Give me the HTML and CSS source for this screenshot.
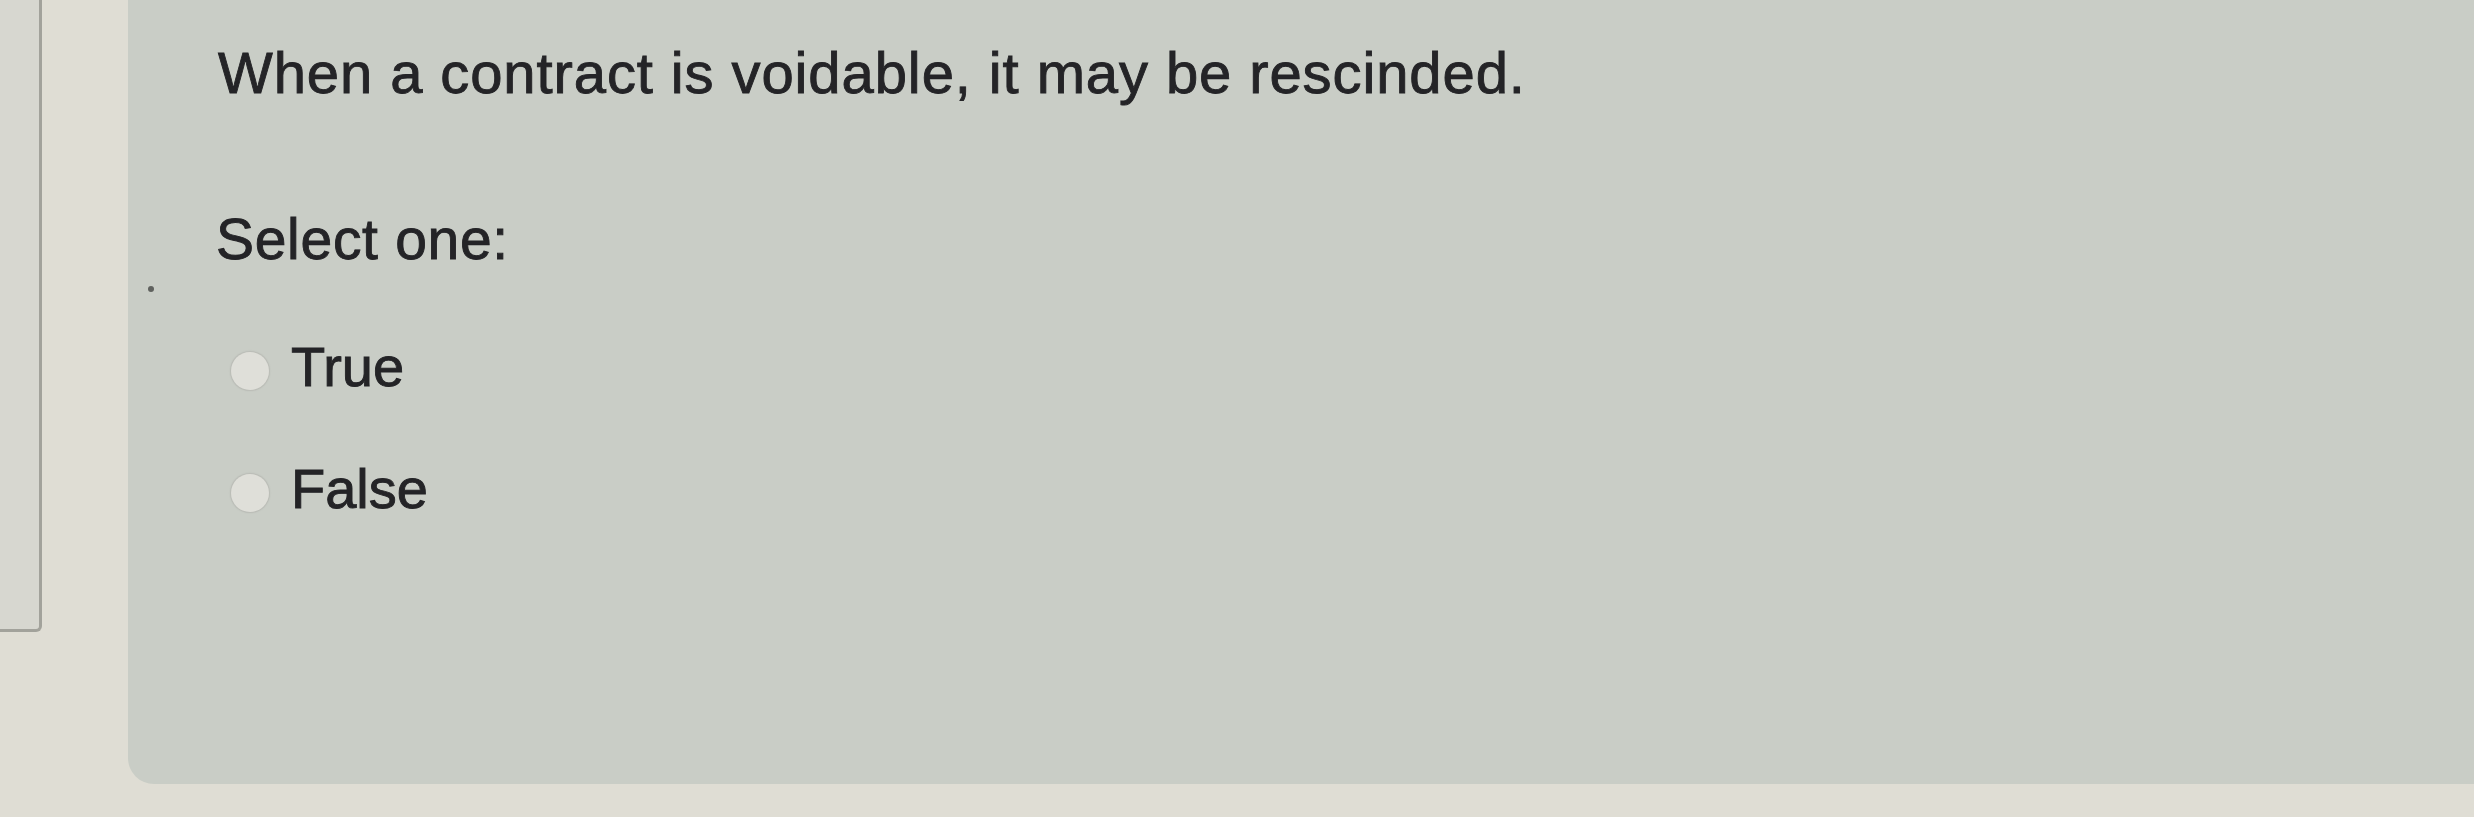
FILE: index.html
```html
<!DOCTYPE html>
<html>
<head>
<meta charset="utf-8">
<link rel="stylesheet" href="styles.css">
</head>
<body>
<div class="page">
  <div class="side"><div class="side-box"></div></div>
  <div class="panel">
    <span class="dot"></span>
    <p class="question">When a contract is voidable, it may be rescinded.</p>
    <p class="prompt">Select one:</p>
    <div class="options">
      <label class="option option-true"><span class="radio"></span><span class="label">True</span></label>
      <label class="option option-false"><span class="radio"></span><span class="label">False</span></label>
    </div>
  </div>
</div>
</body>
</html>
```
FILE: styles.css
```css
html, body {
  margin: 0;
  padding: 0;
  background: #dfddd4;
}
.page {
  display: flex;
  width: 2474px;
  height: 817px;
  overflow: hidden;
  font-family: "Liberation Sans", Arial, sans-serif;
  color: #242427;
  -webkit-text-stroke: 0.9px #242427;
}
.side {
  width: 128px;
  flex: none;
}
.side-box {
  width: 39px;
  height: 629px;
  background: #d7d7d0;
  border-right: 3px solid #a2a29b;
  border-bottom: 3px solid #a2a29b;
  border-bottom-right-radius: 6px;
}
.panel {
  position: relative;
  flex: 1;
  height: 784px;
  background: #c9cdc6;
  border-bottom-left-radius: 26px;
  padding: 40px 0 0 90px;
  box-sizing: border-box;
}
.dot {
  position: absolute;
  left: 20px;
  top: 286px;
  width: 6px;
  height: 6px;
  border-radius: 50%;
  background: #5f615e;
}
.question {
  margin: 0;
  font-size: 58px;
  line-height: 66px;
  letter-spacing: 0.9px;
}
.prompt {
  margin: 100px 0 0 -2px;
  font-size: 57px;
  line-height: 66px;
  letter-spacing: 0.7px;
}
.options {
  display: flex;
  flex-direction: column;
  margin-top: 62px;
  gap: 56px;
}
.option {
  display: flex;
  align-items: center;
  height: 66px;
  font-size: 56px;
  line-height: 66px;
}
.radio {
  width: 38px;
  height: 38px;
  margin: 8px 22px 0 13px;
  border-radius: 50%;
  background: #dfdfd9;
  box-shadow: 0 0 0 1px #bcbeb8, 0 0 3px rgba(0,0,0,0.12);
  flex: none;
}
.label {
  display: block;
}
```
